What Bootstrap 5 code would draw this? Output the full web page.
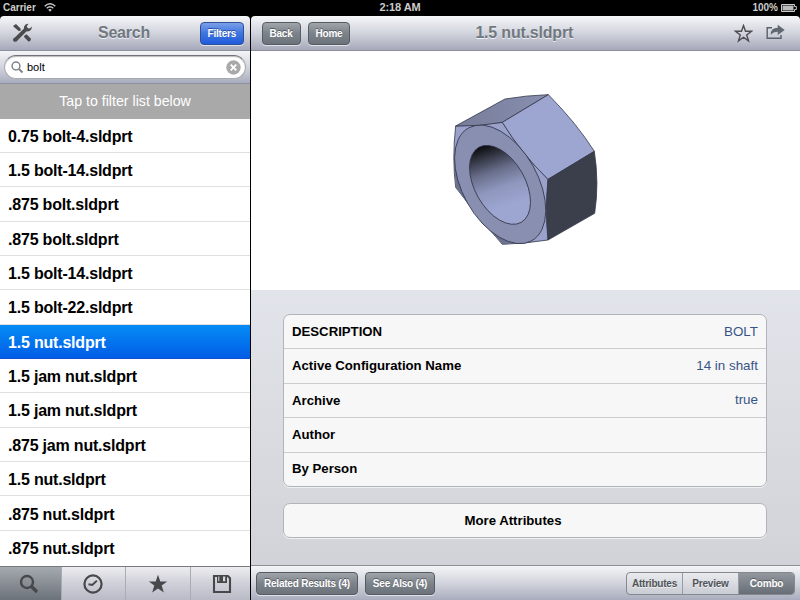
<!DOCTYPE html>
<html lang="en">
<head>
<meta charset="utf-8">
<meta name="viewport" content="width=device-width, initial-scale=1">
<title>Search</title>
<link href="https://cdn.jsdelivr.net/npm/bootstrap@5.3.0/dist/css/bootstrap.min.css" rel="stylesheet">
<style>
body{font-family:"Liberation Sans",Arial,sans-serif;font-size:13px;line-height:1.2;color:#000;background:#000;overflow:hidden}
svg{display:block;flex:none}
.screen{width:800px;height:600px}
.content-row{min-height:0}
.status{height:16px;color:#ccc;font-size:10px;font-weight:700;padding:0 3px 1px 3px}
.status>div{flex:1 1 0}
.status .clock{font-size:11px;letter-spacing:-.1px}
.side{width:250px}
.main-pane{width:549px;margin-left:1px}
.bar{height:34px;background:linear-gradient(#f6f7f9,#d2d4dd 50%,#a6a9ba);border-bottom:1px solid #8d909b;box-sizing:content-box;border-radius:4px 4px 0 0}
.bar .ttl{font-size:16px;letter-spacing:-.2px;font-weight:700;color:#717880;text-shadow:0 1px 0 #eef0f4}
.bar>div{flex:1 1 0}
.side .bar .ttl{margin-left:-8px}
.main-pane .bar .ttl{margin-left:2px}
.ibtn{height:23px;padding:0 7px;border:1px solid #565c64;border-radius:4px;font-size:10px;letter-spacing:-.22px;font-weight:700;line-height:21px;color:#fff;background:linear-gradient(#a0a5ab,#7c8289 50%,#6d737b);text-shadow:0 -1px 0 #555b63;white-space:nowrap;box-shadow:0 1px 0 #dfe1e8}
.ibtn.blue{background:linear-gradient(#7b9fe8,#3e74e0 50%,#1f5bdc);border-color:#2f4f96;text-shadow:0 -1px 0 #2a509f}
.searchbar{height:33px;background:linear-gradient(#f4f5f7,#ced1db 55%,#a9acbd);border-bottom:1px solid #8e919f;padding:4px 4px 5px}
.field{height:24px;border-radius:12px;border:1px solid #a9abb0;border-top:1.5px solid #707379;background:#fff;padding:0 4px 0 6px;font-size:11px;box-shadow:inset 0 1px 1px #bbb}
.hint{height:34.5px;background:#a9a9a9;color:#fff;font-size:14.2px;padding-top:1px}
.files{flex:1 1 0;min-height:0;background:#fff;overflow:hidden}
.files .item{height:34.37px;padding:2px 0 0 8px;font-size:16px;letter-spacing:-.2px;font-weight:700;border-bottom:1px solid #e0e0e0}
.files .item.on{color:#fff;background:linear-gradient(#058cf5,#015de6);border-bottom-color:#0b50d0}
.tabs{height:34px;border-top:1px solid #77797d;background:linear-gradient(#ededf0,#cfd0d8 50%,#b8bac6)}
.tabs>div{width:64.3px;border-left:1px solid #aaacb3}
.tabs>div:first-child{width:61px;border:0;background:linear-gradient(#a5aab0,#6c7279)}
.tabs>div:last-child{width:60.4px}
.preview{height:239px;background:#fff;padding:29px 0 0 179px}
.details{flex:1 1 0;min-height:0;background:linear-gradient(#e1e4ea,#d2d3d8);padding:24px 33px 0 32px}
.panel{border:1px solid #b1b4b9;border-radius:7px;background:#f7f7f7;overflow:hidden;box-shadow:0 1px 0 #eff0f2}
.prop{height:34.4px;padding:0 8px;font-weight:700;font-size:13.2px;border-bottom:1px solid #cbcccd}
.prop:last-child{border:0;height:33.4px}
.prop .val{font-weight:400;font-size:13.4px;color:#385487}
.more{margin-top:16px}
.more .prop{padding-right:32px}
.foot{height:35px;border-top:1px solid #8d8f94;background:linear-gradient(#f4f5f7,#ced1da 55%,#a9acbd);padding:0 5px}
.seg{height:23px;border:1px solid #85888f;border-radius:4px;font-size:10px;letter-spacing:-.2px;font-weight:700;color:#50545a;line-height:21px;overflow:hidden;background:linear-gradient(#e9eaed,#c9ccd3);text-shadow:0 1px 0 #eee;text-align:center}
.seg span{width:56px}
.seg span:first-child{width:55px}
.seg span+span{border-left:1px solid #989ba3}
.seg .on{color:#fff;background:linear-gradient(#92979e,#686e76);text-shadow:0 -1px 0 #555b63}
</style>
<script src="https://cdn.jsdelivr.net/npm/bootstrap@5.3.0/dist/js/bootstrap.bundle.min.js"></script>
</head>
<body>
<div class="screen d-flex flex-column">
  <div class="status d-flex align-items-center">
    <div class="d-flex align-items-center gap-2"><span>Carrier</span>
      <svg width="12" height="9" viewBox="0 0 12 9" fill="none" stroke="#ccc" stroke-width="1.4"><path d="M.7 3.2Q6-1.5 11.3 3.2M2.7 5.2Q6 2.2 9.3 5.2"/><path d="M4.2 6.8Q6 5.2 7.8 6.8L6 8.8Z" fill="#ccc" stroke="none"/></svg></div>
    <div class="clock text-center">2:18 AM</div>
    <div class="d-flex align-items-center justify-content-end" style="gap:3px"><span>100%</span>
      <svg width="16" height="8" viewBox="0 0 16 8"><path d="M.5.5h13v2h1.8v3h-1.8v2H.5z" fill="none" stroke="#ccc"/><path d="M1.500 1.500h11v5h-11z" fill="#bbb"/></svg></div>
  </div>
  <div class="content-row d-flex flex-grow-1">
    <div class="side d-flex flex-column">
      <div class="bar d-flex align-items-center">
        <div style="padding-left:12px"><svg width="21" height="20" viewBox="0 0 21 20"><path d="M1 3L4 1L8.5 5.6L8.7 7.8L6.7 8L2.8 4.8Z" fill="#4a4b4d"/><path d="M12.5 12.5L14.5 11.3L19 15.7Q19 18 16.7 18.7L12 14Z" fill="#4a4b4d"/><path d="M12 5.5Q11.5 2.5 14.8 1L16.6.8L14.7 3.2L16 5.4L18.2 5.2L19.8 3.3Q20 8.5 14.4 8.5L5.7 17.2Q4.6 19.2 2.5 18.7Q.3 17.6 1.4 15.4L3.4 14.1Z" fill="#4a4b4d"/></svg></div>
        <span class="ttl">Search</span>
        <div class="d-flex justify-content-end" style="padding-right:6px"><span class="ibtn blue">Filters</span></div>
      </div>
      <div class="searchbar"><div class="field d-flex align-items-center">
        <svg width="13" height="13" viewBox="0 0 13 13" fill="none" stroke="#7c838b" stroke-width="1.5"><circle cx="5" cy="5" r="3.9"/><path d="M8 8l3.5 3.5" stroke-width="2"/></svg>
        <span class="flex-grow-1" style="padding:2px 0 0 3px">bolt</span>
        <svg width="15" height="15" viewBox="0 0 15 15"><circle cx="7.5" cy="7.5" r="7.2" fill="#a9a9a9"/><path d="M4.7 4.7l5.6 5.6m0-5.6l-5.6 5.6" stroke="#fff" stroke-width="1.9"/></svg></div></div>
      <div class="hint d-flex align-items-center justify-content-center">Tap to filter list below</div>
      <div class="files">
        <div class="item d-flex align-items-center">0.75 bolt-4.sldprt</div>
        <div class="item d-flex align-items-center">1.5 bolt-14.sldprt</div>
        <div class="item d-flex align-items-center">.875 bolt.sldprt</div>
        <div class="item d-flex align-items-center">.875 bolt.sldprt</div>
        <div class="item d-flex align-items-center">1.5 bolt-14.sldprt</div>
        <div class="item d-flex align-items-center">1.5 bolt-22.sldprt</div>
        <div class="item on d-flex align-items-center">1.5 nut.sldprt</div>
        <div class="item d-flex align-items-center">1.5 jam nut.sldprt</div>
        <div class="item d-flex align-items-center">1.5 jam nut.sldprt</div>
        <div class="item d-flex align-items-center">.875 jam nut.sldprt</div>
        <div class="item d-flex align-items-center">1.5 nut.sldprt</div>
        <div class="item d-flex align-items-center">.875 nut.sldprt</div>
        <div class="item d-flex align-items-center border-0">.875 nut.sldprt</div>
      </div>
      <div class="tabs d-flex">
        <div class="d-flex align-items-center justify-content-center"><svg style="margin-right:4px" width="20" height="20" viewBox="0 0 20 20" fill="none" stroke="#47484a"><circle cx="8" cy="8" r="6" stroke-width="2.4"/><path d="M12.3 12.3L18 18" stroke-width="3.4"/></svg></div>
        <div class="d-flex align-items-center justify-content-center"><svg style="margin-right:2px" width="20" height="20" viewBox="0 0 20 20" fill="none" stroke="#47484a" stroke-width="2.2"><circle cx="10" cy="10" r="8.6"/><path d="M5.500 10.200L9.300 11L13.900 6.600" stroke-width="2"/></svg></div>
        <div class="d-flex align-items-center justify-content-center"><svg width="20" height="20" viewBox="0 0 20 20"><path d="M10 .7L12.3 7.4H19.2L13.7 11.6L15.8 18.5L10 14.4L4.2 18.5L6.3 11.6L.8 7.4H7.7Z" fill="#47484a"/></svg></div>
        <div class="d-flex align-items-center justify-content-center"><svg style="margin-left:3px" width="20" height="20" viewBox="0 0 20 20"><path d="M2 2H15.8L18 4.2V18H2Z" fill="none" stroke="#47484a" stroke-width="2.1"/><path d="M5 2H15V9H5Z" fill="#47484a"/><path d="M6.3 2.5h1v4.8h-1zM11 2.5h2.2v4.8H11z" fill="#d7d8de"/></svg></div>
      </div>
    </div>
    <div class="main-pane d-flex flex-column">
      <div class="bar d-flex align-items-center">
        <div class="d-flex" style="padding-left:10.5px;gap:7px"><span class="ibtn">Back</span><span class="ibtn">Home</span></div>
        <span class="ttl">1.5 nut.sldprt</span>
        <div class="d-flex justify-content-end align-items-center" style="padding-right:15px;gap:13px">
          <svg width="19" height="19" viewBox="0 0 19 19"><path d="M9.5 1.6L11.5 7.3H17.4L12.7 10.9L14.5 16.9L9.5 13.3L4.5 16.9L6.3 10.9L1.6 7.3H7.5Z" fill="none" stroke="#4c4e52" stroke-width="1.4"/></svg>
          <svg style="margin-top:-3px" width="19" height="16" viewBox="0 0 19 16"><path d="M6 3.7H1.2V14.3H15V11" fill="none" stroke="#596069" stroke-width="1.4"/><path d="M4.7 10.8Q4.5 4 11.7 3.8V.8L18.7 6L11.7 11V7.8Q7.5 7.6 4.7 10.8Z" fill="#606871"/></svg>
        </div>
      </div>
      <div class="preview">
        <svg width="190" height="180" viewBox="0 0 570 540" stroke="#34374a" stroke-width="2.4" stroke-linejoin="round">
          <defs>
            <linearGradient id="bore" gradientUnits="userSpaceOnUse" x1="152" y1="198" x2="217" y2="385" gradientTransform="rotate(-60.5 210 314.5)"><stop offset="0" stop-color="#08090c"/><stop offset=".14" stop-color="#282a34"/><stop offset=".42" stop-color="#676d89"/><stop offset=".7" stop-color="#8f97be"/><stop offset="1" stop-color="#9da6d1"/></linearGradient>
            <linearGradient id="top" x1="0" x2="1"><stop offset="0" stop-color="#777c99"/><stop offset="1" stop-color="#888fb0"/></linearGradient>
          </defs>
          <path d="M77 138Q66 235 77 322Q140 408 217 493Q285 491 354 480L354 298Q275 221 217 127Q145 138 77 138Z" fill="#9aa2cc"/>
          <path d="M77 322Q140 408 217 493L265 489Q170 450 73 250Z" fill="#6c718d" stroke="none"/>
          <path d="M77 138L225 57Q290 46 355 44L217 127Q145 140 77 138Z" fill="url(#top)"/>
          <path d="M217 127L355 44Q440 130 493 214L354 298Q275 221 217 127Z" fill="#9da6d1"/>
          <path d="M354 298L493 214Q508 310 494 400L354 480Q344 390 354 298Z" fill="#3b3e4b"/>
          <ellipse cx="210.5" cy="313" rx="194" ry="113" transform="rotate(60.7 210.5 313)" fill="#898fb0"/>
          <ellipse cx="210" cy="314.5" rx="129.3" ry="75.4" transform="rotate(60.5 210 314.5)" fill="url(#bore)"/>
        </svg>
      </div>
      <div class="details">
        <div class="panel">
          <div class="prop d-flex align-items-center justify-content-between"><span>DESCRIPTION</span><span class="val">BOLT</span></div>
          <div class="prop d-flex align-items-center justify-content-between"><span>Active Configuration Name</span><span class="val">14 in shaft</span></div>
          <div class="prop d-flex align-items-center justify-content-between"><span>Archive</span><span class="val">true</span></div>
          <div class="prop d-flex align-items-center">Author</div>
          <div class="prop d-flex align-items-center">By Person</div>
        </div>
        <div class="panel more"><div class="prop d-flex align-items-center justify-content-center">More Attributes</div></div>
      </div>
      <div class="foot d-flex align-items-center">
        <span class="ibtn">Related Results (4)</span><span class="ibtn" style="margin-left:7px">See Also (4)</span>
        <div class="seg d-flex ms-auto"><span>Attributes</span><span>Preview</span><span class="on">Combo</span></div>
      </div>
    </div>
  </div>
</div>
</body>
</html>
